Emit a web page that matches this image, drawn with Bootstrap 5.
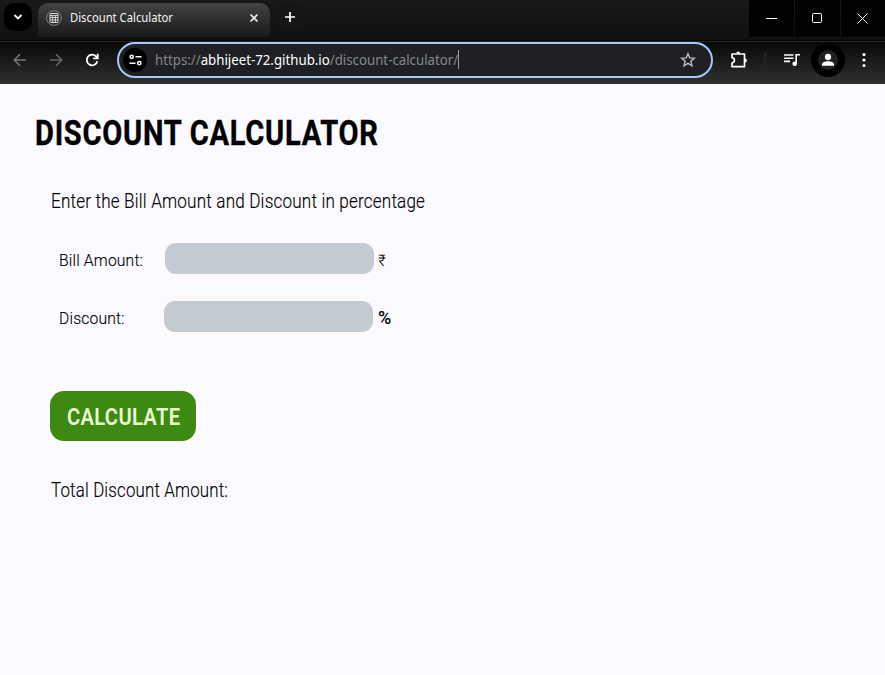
<!DOCTYPE html>
<html lang="en">
<head>
<meta charset="utf-8">
<meta name="viewport" content="width=device-width, initial-scale=1">
<title>Discount Calculator</title>
<link href="https://cdn.jsdelivr.net/npm/bootstrap@5.3.0/dist/css/bootstrap.min.css" rel="stylesheet">
<style>
body{width:885px;height:675px;overflow:hidden;background:#fbfaff;color:#000;font-family:Roboto,"Open Sans",sans-serif}
svg{display:block;flex:none}
.tabstrip{height:41px;background:linear-gradient(#191919,#101010);border-bottom:1px solid #050505}
.tab-menu{width:28px;height:28px;border-radius:10px;background:#000;margin:3px 0 0 4px}
.tab-active{width:232px;height:34px;margin:3px 0 0 6px;border-radius:10px 10px 0 0;background:linear-gradient(#434343,#1a1a1a);padding:0 9px 5px 8px}
.tab-new{width:28px;height:28px;border-radius:50%;background:#151515;margin:3px 0 0 6px}
.chrome-text{font-family:"Noto Sans","Open Sans",sans-serif;white-space:pre;line-height:18px}
.tab-title{font-size:12px;color:#f4f4f4;margin-left:8px;transform-origin:0 50%;transform:scaleX(.937);width:103px}
.win-btn{width:45px;height:37px;background:#020202;margin-left:1px}
.win-btn:first-child{margin-left:0;padding-right:1px}
.win-btn:last-child{width:44px;padding-right:1px}
.toolbar{height:43px;background:linear-gradient(#080808,#303030);border-top:1px solid #252525}
.nav-back{margin-left:13px}
.nav-gap{margin-left:22px}
.omnibox{width:596px;height:36px;margin-left:18px;border:2px solid #a8c7fa;border-radius:18px;background:#1f2024;padding-left:4px;padding-right:15px}
.site-info{width:24px;height:24px;border-radius:50%;background:#000}
.url{font-size:14px;color:#858789;margin-left:8px;transform-origin:0 50%;transform:scaleX(.946);width:302px}
.url b{font-weight:400;color:#fff}
.caret{width:1px;height:19px;background:#999;margin:0 0 2px 1px}
.extensions{margin-left:17px}
.divider{margin-left:16px}
.media{margin-left:18px}
.avatar{width:34px;height:34px;border-radius:50%;background:#000;margin-left:10px}
.more{margin-left:17px}
.fit{display:block;white-space:nowrap;transform-origin:0 50%;width:max-content}
.headline{font-size:35px;line-height:40px;font-weight:700;letter-spacing:.9px;-webkit-text-stroke:.4px #000;margin:30px 0 0 35px;height:40px}
.headline .fit{transform:scaleX(.83)}
.intro{font-size:19.4px;line-height:24px;height:24px;font-weight:300;letter-spacing:.2px;-webkit-text-stroke:.15px #000;margin:36px 0 0 50.5px}
.intro .fit{transform:scaleX(.882)}
.entries{padding-top:29px}
.entry{height:31px;padding-left:59px;margin-bottom:27px}
.entry label{width:105px;height:24px;line-height:24px;font-size:17.4px;font-weight:300;letter-spacing:.2px;-webkit-text-stroke:.15px #000;margin-top:5px}
.entry .fit{transform:scaleX(.9)}
.field{width:209px;height:31px;border:0;border-radius:11px;background:#c4cbd3;padding:0 10px}
#bill{margin-left:1px}
.unit{font-size:16px;line-height:24px;font-weight:300;margin:6px 0 0 4px}
.unit-percent{font-size:18px;font-weight:500;margin:5px 0 0 5px}
.calc{width:146px;height:50px;margin:59px 0 0 50px;border:0;border-radius:14px;background:#3e8914;color:#e8fccf;font-size:24.8px;font-weight:600;letter-spacing:.4px;line-height:50px;padding:1px 0 0 16.5px;display:block}
.calc:hover{background:#3e8914;color:#e8fccf}
.calc .fit{transform:scaleX(.813)}
.total{font-size:19.4px;line-height:24px;height:24px;font-weight:300;letter-spacing:.2px;-webkit-text-stroke:.15px #000;margin:38px 0 0 50.5px}
.total .fit{transform:scaleX(.87)}
</style>
</head>
<body>
<header>
  <div class="tabstrip d-flex">
    <div class="tab-menu d-flex align-items-center justify-content-center">
      <svg width="10" height="10" fill="none" stroke="#fff" stroke-width="1.8"><path d="M1.500 3 5 6.500 8.500 3"/></svg>
    </div>
    <div class="tab-active d-flex align-items-center">
      <svg width="16" height="16" fill="none"><circle cx="8" cy="8" r="7.400" stroke="#8b8b8b" stroke-width=".9"/><rect x="4" y="3.500" width="8" height="9" rx="1" stroke="#ddd"/><path d="M4 5.500h8M4 7.500h8M4 10h8M6.700 6v6M9.400 6v6" stroke="#ddd" stroke-width=".9"/></svg>
      <span class="chrome-text tab-title">Discount Calculator</span>
      <svg class="ms-auto" width="13" height="10" fill="none" stroke="#eee" stroke-width="1.7"><path d="m2.500 1.500 7 7m0-7-7 7"/></svg>
    </div>
    <div class="tab-new d-flex align-items-center justify-content-center">
      <svg width="12" height="12" stroke="#fff" stroke-width="1.7"><path d="M6 1v10M1 6h10"/></svg>
    </div>
    <div class="ms-auto d-flex">
      <div class="win-btn d-flex align-items-center justify-content-center"><svg width="11" height="11" stroke="#fff"><path d="M0 5.500h11"/></svg></div>
      <div class="win-btn d-flex align-items-center justify-content-center"><svg width="11" height="11" fill="none" stroke="#fff"><rect x=".5" y=".5" width="9" height="9" rx="1.200"/></svg></div>
      <div class="win-btn d-flex align-items-center justify-content-center"><svg width="11" height="11" stroke="#fff"><path d="m.5.5 10 10m0-10-10 10"/></svg></div>
    </div>
  </div>
  <div class="toolbar d-flex align-items-start">
    <div class="d-flex align-items-center w-100">
      <svg class="nav-back" width="14" height="14" fill="none" stroke="#777" stroke-width="1.600"><path d="M13 7H1.500M7 1.300 1.300 7 7 12.700"/></svg>
      <svg class="nav-gap" width="14" height="14" fill="none" stroke="#666" stroke-width="1.600"><path d="M1 7h11.500M7 1.300 12.700 7 7 12.700"/></svg>
      <svg class="nav-gap" width="14" height="14" fill="none" stroke="#fff" stroke-width="1.800"><path d="M12.300 8.200A5.300 5.300 0 1 1 10.800 3.200L12 4.600"/><path d="M12.700.8v4.600H8.200"/></svg>
      <div class="omnibox d-flex align-items-center">
        <div class="site-info d-flex align-items-center justify-content-center">
          <svg width="13" height="12" fill="none" stroke="#fff" stroke-width="1.500"><circle cx="2.700" cy="2.800" r="1.600"/><path d="M6.500 2.800h6M.5 9.200h6"/><circle cx="10.300" cy="9.200" r="1.600"/></svg>
        </div>
        <span class="chrome-text url">https://<b>abhijeet-72.github.io</b>/discount-calculator/</span>
        <span class="caret"></span>
        <svg class="ms-auto" width="16" height="16" fill="none" stroke="#bcbcbc" stroke-width="1.400"><path d="m8 1.700 1.800 4.200 4.600.4-3.500 3 1.100 4.500L8 11.400l-4 2.400 1.100-4.500-3.500-3 4.600-.4Z"/></svg>
      </div>
      <svg class="extensions" width="18" height="18" fill="none" stroke="#fff" stroke-width="1.700" stroke-linejoin="round"><path d="M2 3h12.500v12.700H2v-3.700c3.200-.5 3.200-4.800 0-5.300Z"/><path d="M6.300 2.500a1.900 1.900 0 0 1 3.800 0ZM15 7.500a1.900 1.900 0 0 1 0 3.800Z" fill="#fff" stroke="none"/></svg>
      <svg class="divider" width="2" height="16"><path d="M1 0v16" stroke="#222" stroke-width="2"/></svg>
      <svg class="media" width="17" height="14" fill="none" stroke="#fff" stroke-width="1.600"><path d="M0 2h9.500M0 5.200h9.500M0 8.400h6M12.200 10.500V1.800H16"/><circle cx="10.700" cy="10.700" r="2.300" fill="#fff" stroke="none"/></svg>
      <div class="avatar d-flex align-items-center justify-content-center"><svg width="20" height="20"><circle cx="10" cy="10" r="10" fill="#202124"/><circle cx="10" cy="6.900" r="3.100" fill="#fff"/><path d="M4 15.800v-1.600c0-4 12-4 12 0v1.600Z" fill="#fff"/></svg></div>
      <svg class="more" width="4" height="16" fill="#fff"><circle cx="2" cy="2.500" r="1.600"/><circle cx="2" cy="8" r="1.600"/><circle cx="2" cy="13.500" r="1.600"/></svg>
    </div>
  </div>
</header>
<main>
  <h1 class="headline"><span class="fit">DISCOUNT CALCULATOR</span></h1>
  <p class="intro"><span class="fit">Enter the Bill Amount and Discount in percentage</span></p>
  <form class="entries">
    <div class="entry d-flex">
      <label for="bill"><span class="fit">Bill Amount:</span></label>
      <input id="bill" class="field" type="text"><span class="unit">₹</span>
    </div>
    <div class="entry d-flex">
      <label for="discount"><span class="fit">Discount:</span></label>
      <input id="discount" class="field" type="text"><span class="unit unit-percent">%</span>
    </div>
    <button type="button" class="btn calc"><span class="fit">CALCULATE</span></button>
  </form>
  <p class="total"><span class="fit">Total Discount Amount:</span></p>
</main>
<script src="https://cdn.jsdelivr.net/npm/bootstrap@5.3.0/dist/js/bootstrap.bundle.min.js"></script>
</body>
</html>
